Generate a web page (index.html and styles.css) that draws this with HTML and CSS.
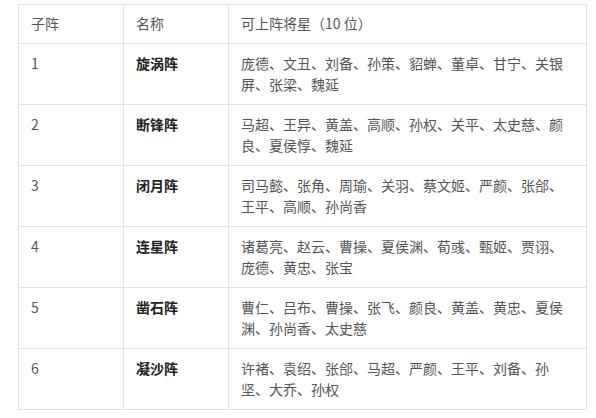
FILE: index.html
```html
<!DOCTYPE html>
<html lang="zh-CN">
<head>
<meta charset="utf-8">
<title>子阵</title>
<link rel="stylesheet" href="styles.css">
</head>
<body>
<div class="page">
<table class="grid">
  <colgroup>
    <col class="c-id">
    <col class="c-name">
    <col class="c-list">
  </colgroup>
  <thead>
    <tr><th>子阵</th><th>名称</th><th>可上阵将星（10 位）</th></tr>
  </thead>
  <tbody>
    <tr><td>1</td><td class="nm">旋涡阵</td><td>庞德、文丑、刘备、孙策、貂蝉、董卓、甘宁、关银屏、张梁、魏延</td></tr>
    <tr><td>2</td><td class="nm">断锋阵</td><td>马超、王异、黄盖、高顺、孙权、关平、太史慈、颜良、夏侯惇、魏延</td></tr>
    <tr><td>3</td><td class="nm">闭月阵</td><td>司马懿、张角、周瑜、关羽、蔡文姬、严颜、张郃、王平、高顺、孙尚香</td></tr>
    <tr><td>4</td><td class="nm">连星阵</td><td>诸葛亮、赵云、曹操、夏侯渊、荀彧、甄姬、贾诩、庞德、黄忠、张宝</td></tr>
    <tr><td>5</td><td class="nm">凿石阵</td><td>曹仁、吕布、曹操、张飞、颜良、黄盖、黄忠、夏侯渊、孙尚香、太史慈</td></tr>
    <tr><td>6</td><td class="nm">凝沙阵</td><td>许褚、袁绍、张郃、马超、严颜、王平、刘备、孙坚、大乔、孙权</td></tr>
  </tbody>
</table>
</div>
</body>
</html>
```
FILE: styles.css
```css
html, body {
  margin: 0;
  padding: 0;
  background: #ffffff;
}
.page {
  padding: 4px 0 0 18px;
}
.grid {
  border-collapse: collapse;
  table-layout: fixed;
  width: 568px;
  font-family: "Microsoft YaHei", "Noto Sans CJK SC", sans-serif;
  font-size: 14px;
  line-height: 21px;
  color: #555555;
}
.c-id { width: 105px; }
.c-name { width: 105px; }
.c-list { width: 358px; }
.grid th,
.grid td {
  border: 1px solid #e2e2e2;
  padding: 9px 12px 9px 12px;
  text-align: left;
  vertical-align: top;
  font-weight: normal;
}
.grid th {
  padding: 8px 12px 9px 12px;
}
.grid td.nm {
  font-weight: bold;
  color: #222222;
}
```
